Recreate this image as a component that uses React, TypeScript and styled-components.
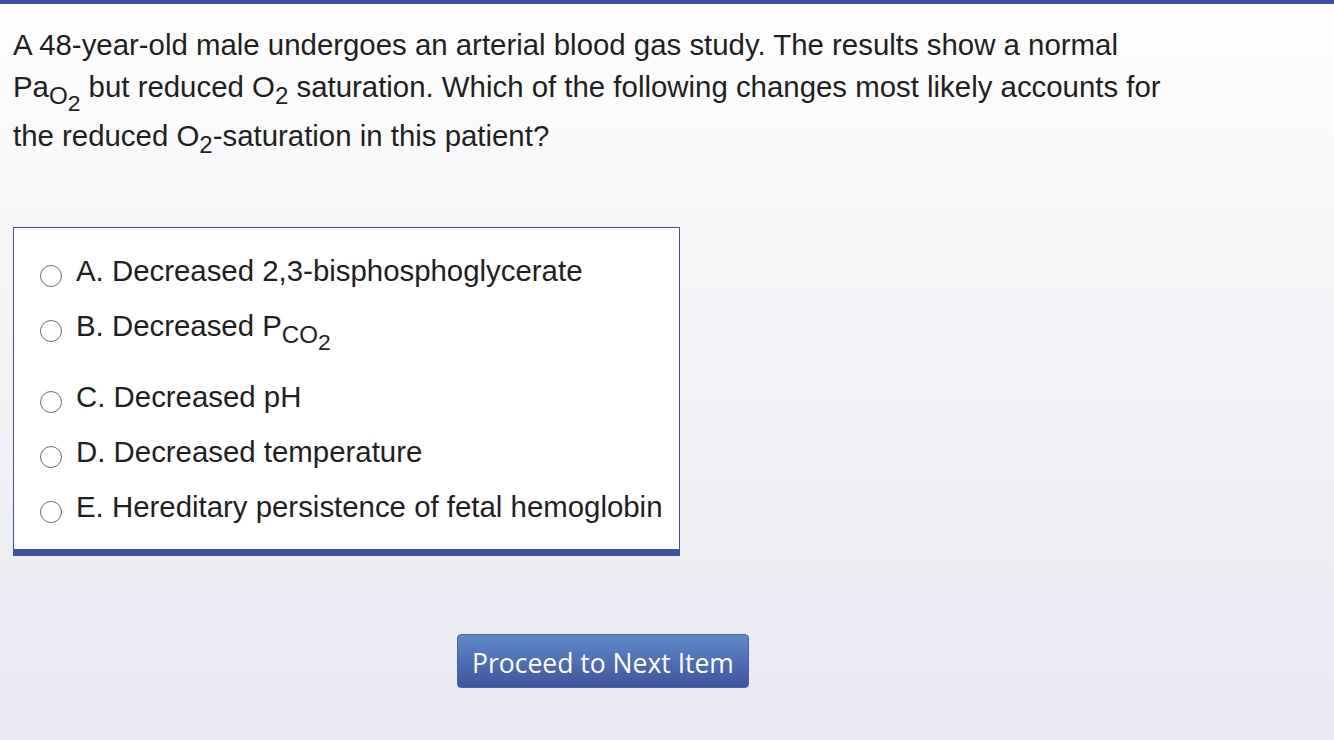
import styled, { createGlobalStyle } from "styled-components";

const GlobalStyle = createGlobalStyle`
  html, body {
    margin: 0;
    padding: 0;
  }
  body {
    font-family: "Liberation Sans", Arial, sans-serif;
    color: #1f1f1f;
  }
`;

const Page = styled.div`
  width: 1334px;
  height: 740px;
  overflow: hidden;
  background: linear-gradient(to bottom, #fefefe 0%, #f6f6f9 35%, #e8e9f2 100%);
  border-top: 4px solid #3f51a0;
  box-sizing: border-box;
`;

const Content = styled.main`
  padding: 20px 0 0 13px;
`;

const Question = styled.div`
  width: 1200px;
  font-size: 29.4px;
`;

const Line = styled.div<{ $extra?: number }>`
  line-height: 42px;
  padding-bottom: ${p => p.$extra ?? 0}px;
`;

const Sub = styled.sub`
  font-size: 0.82em;
  vertical-align: -0.28em;
  line-height: 0;
`;

const SubSub = styled.sub`
  font-size: 0.95em;
  vertical-align: -0.3em;
  line-height: 0;
`;

const Choices = styled.div`
  margin-top: 70px;
  width: 667px;
  box-sizing: border-box;
  background: #fff;
  border: 1.5px solid #3f51a0;
  border-bottom: 7px solid #3f51a0;
  padding: 27px 0 26px 0;
  display: flex;
  flex-direction: column;
  gap: 23px;
`;

const Option = styled.label<{ $tall?: boolean }>`
  display: flex;
  align-items: center;
  gap: 14px;
  padding-left: 26px;
  font-size: 29.4px;
  line-height: 32px;
  min-height: 32px;
  padding-bottom: ${p => (p.$tall ? "16px" : "0")};
`;

const Radio = styled.span`
  width: 22px;
  height: 22px;
  border: 1.6px solid #6e6e6e;
  border-radius: 50%;
  box-sizing: border-box;
  background: #fff;
  flex-shrink: 0;
  margin-top: 9px;
`;

const Footer = styled.div`
  padding: 78px 0 0 444px;
`;

const NextButton = styled.button`
  width: 292px;
  height: 54px;
  border: 1px solid #4a62aa;
  border-radius: 4px;
  background: linear-gradient(to bottom, #5e8ac8 0%, #3f53a1 100%);
  color: #fff;
  font-family: "Open Sans", "Noto Sans", sans-serif;
  font-size: 26.5px;
  cursor: pointer;
  padding: 3px 0 0 0;
`;

export default function App() {
  const options = [
    { key: "A", text: <>A. Decreased 2,3-bisphosphoglycerate</> },
    {
      key: "B",
      text: (
        <>
          B. Decreased P<Sub>CO<SubSub>2</SubSub></Sub>
        </>
      ),
      tall: true,
    },
    { key: "C", text: <>C. Decreased pH</> },
    { key: "D", text: <>D. Decreased temperature</> },
    { key: "E", text: <>E. Hereditary persistence of fetal hemoglobin</> },
  ];

  return (
    <Page>
      <GlobalStyle />
      <Content>
        <Question>
          <Line>A 48-year-old male undergoes an arterial blood gas study. The results show a normal</Line>
          <Line $extra={7}>
            Pa<Sub>O<SubSub>2</SubSub></Sub> but reduced O<Sub>2</Sub> saturation. Which of the
            following changes most likely accounts for
          </Line>
          <Line>
            the reduced O<Sub>2</Sub>-saturation in this patient?
          </Line>
        </Question>

        <Choices>
          {options.map(o => (
            <Option key={o.key} $tall={o.tall}>
              <Radio />
              <span>{o.text}</span>
            </Option>
          ))}
        </Choices>

        <Footer>
          <NextButton>Proceed to Next Item</NextButton>
        </Footer>
      </Content>
    </Page>
  );
}
